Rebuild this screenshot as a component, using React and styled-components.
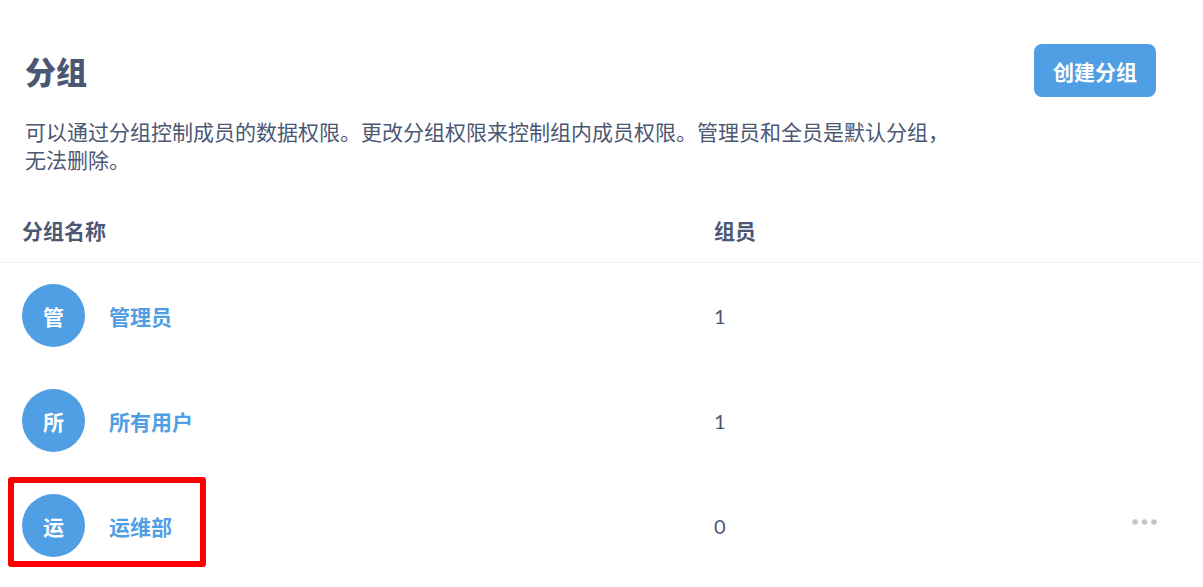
import styled, { createGlobalStyle } from "styled-components";

const GlobalStyle = createGlobalStyle`
    body {
        margin: 0;
        background: #ffffff;
        font-family: Lato, "Noto Sans CJK SC", sans-serif;
        color: #4c5773;
    }
`;

const Page = styled.div`
    width: 100%;
    overflow: hidden;
`;

const Header = styled.div`
    display: flex;
    align-items: center;
    justify-content: space-between;
    height: 53px;
    margin-top: 44px;
    padding: 0 47px 0 25px;
`;

const Title = styled.h2`
    margin: 0;
    font-size: 31px;
    font-weight: 900;
    color: #4c5773;
`;

const PrimaryButton = styled.button`
    width: 122px;
    height: 53px;
    border: none;
    border-radius: 8px;
    background: #509ee3;
    color: #ffffff;
    font-family: inherit;
    font-size: 21px;
    font-weight: 700;
    cursor: pointer;
`;

const Description = styled.p`
    margin: 21px 0 0 25px;
    max-width: 935px;
    font-size: 21px;
    line-height: 28px;
    color: #4c5773;
`;

const Table = styled.div`
    margin-top: 24px;
`;

const Row = styled.div`
    position: relative;
    display: grid;
    grid-template-columns: 692px 1fr auto;
    align-items: center;
    height: ${(p) => (p.$head ? "64px" : "105px")};
    padding: 0 44px 0 22px;
    border-bottom: ${(p) => (p.$head ? "1px solid #eeeff1" : "none")};
`;

const HeadCell = styled.div`
    font-size: 21px;
    font-weight: 700;
    color: #4c5773;
`;

const NameCell = styled.div`
    display: flex;
    align-items: center;
    gap: 24px;
`;

const Avatar = styled.div`
    width: 63px;
    height: 63px;
    border-radius: 50%;
    background: #509ee3;
    color: #ffffff;
    display: flex;
    align-items: center;
    justify-content: center;
    font-size: 21px;
    font-weight: 700;
`;

const GroupName = styled.a`
    font-size: 21px;
    font-weight: 700;
    color: #509ee3;
    text-decoration: none;
`;

const Count = styled.div`
    font-size: 20px;
    color: #4c5773;
`;

const Highlight = styled.div`
    position: absolute;
    left: 8px;
    top: 4px;
    width: 198px;
    height: 90px;
    box-sizing: border-box;
    border: 6px solid #ff0000;
    border-radius: 3px;
    pointer-events: none;
`;

const MoreButton = styled.div`
    display: flex;
    margin-top: -8px;
`;

const groups = [
    { name: "管理员", count: 1 },
    { name: "所有用户", count: 1 },
    { name: "运维部", count: 0, editable: true, highlight: true },
];

function Dots() {
    return (
        <svg width="28" height="8" viewBox="0 0 28 8">
            <circle cx="4" cy="4" r="2.8" fill="#c2c5cd" />
            <circle cx="13.5" cy="4" r="2.8" fill="#c2c5cd" />
            <circle cx="23" cy="4" r="2.8" fill="#c2c5cd" />
        </svg>
    );
}

function App() {
    return (
        <Page>
            <GlobalStyle />
            <Header>
                <Title>分组</Title>
                <PrimaryButton>创建分组</PrimaryButton>
            </Header>
            <Description>
                可以通过分组控制成员的数据权限。更改分组权限来控制组内成员权限。管理员和全员是默认分组，无法删除。
            </Description>
            <Table>
                <Row $head>
                    <HeadCell>分组名称</HeadCell>
                    <HeadCell>组员</HeadCell>
                    <span />
                </Row>
                {groups.map((g) => (
                    <Row key={g.name}>
                        <NameCell>
                            <Avatar>{g.name[0]}</Avatar>
                            <GroupName href="#">{g.name}</GroupName>
                        </NameCell>
                        <Count>{g.count}</Count>
                        <MoreButton>{g.editable ? <Dots /> : null}</MoreButton>
                        {g.highlight && <Highlight />}
                    </Row>
                ))}
            </Table>
        </Page>
    );
}

export default App;
